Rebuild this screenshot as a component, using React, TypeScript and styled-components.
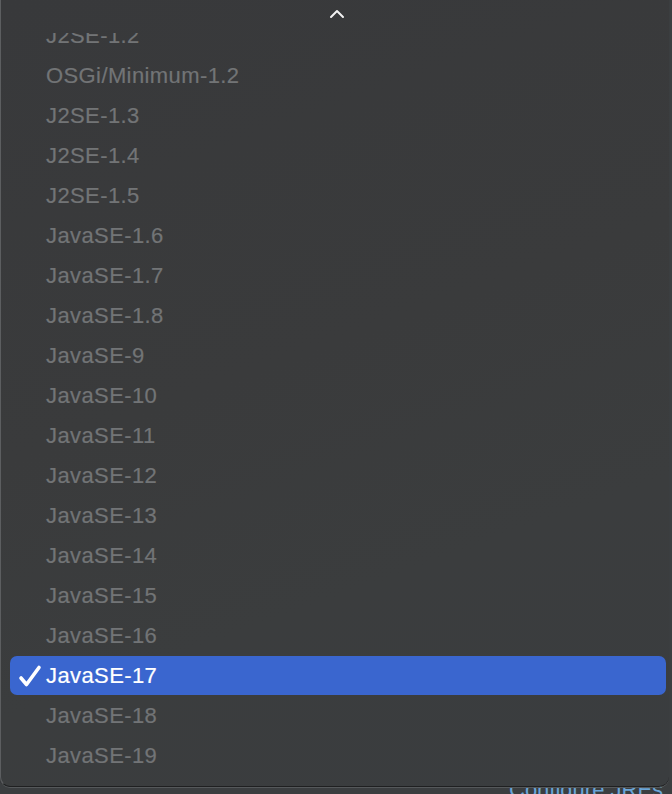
import styled, { createGlobalStyle } from 'styled-components';

const versions = [
  'J2SE-1.2',
  'OSGi/Minimum-1.2',
  'J2SE-1.3',
  'J2SE-1.4',
  'J2SE-1.5',
  'JavaSE-1.6',
  'JavaSE-1.7',
  'JavaSE-1.8',
  'JavaSE-9',
  'JavaSE-10',
  'JavaSE-11',
  'JavaSE-12',
  'JavaSE-13',
  'JavaSE-14',
  'JavaSE-15',
  'JavaSE-16',
  'JavaSE-17',
  'JavaSE-18',
  'JavaSE-19',
];

const selected = 'JavaSE-17';

const GlobalStyle = createGlobalStyle`
    html, body {
        margin: 0;
        padding: 0;
        height: 100%;
        overflow: hidden;
        background: #3b3e40;
        font-family: "Liberation Sans", Arial, sans-serif;
    }
`;

const App = () => {
  return (
    <Page>
      <GlobalStyle />
      <Menu>
        <ScrollUp>
          <svg width="16" height="10" viewBox="0 0 16 10">
            <path d="M2 8 L8 2 L14 8" fill="none" stroke="#f2f2f2" strokeWidth="2" strokeLinecap="round" strokeLinejoin="round" />
          </svg>
        </ScrollUp>
        <Viewport>
          <List>
            {versions.map((v) => {
              const isSelected = v === selected;
              return (
                <Item key={v} $selected={isSelected}>
                  <Check>
                    {isSelected && (
                      <svg width="24" height="24" viewBox="0 0 24 24">
                        <path d="M3 14 L8.5 20.5 L21 3.5" fill="none" stroke="#fff" strokeWidth="3.6" strokeLinecap="round" strokeLinejoin="round" />
                      </svg>
                    )}
                  </Check>
                  {v}
                </Item>
              );
            })}
          </List>
        </Viewport>
      </Menu>
      <Behind>
        <ConfigureLink>Configure JREs...</ConfigureLink>
      </Behind>
    </Page>
  );
};

const Page = styled.div`
    display: flex;
    flex-direction: column;
    width: 672px;
    height: 794px;
    overflow: hidden;
`;

const Menu = styled.div`
    position: relative;
    z-index: 1;
    display: flex;
    flex-direction: column;
    flex-shrink: 0;
    width: 669px;
    height: 787px;
    box-sizing: border-box;
    background: linear-gradient(160deg, #38393b 0%, #3a3b3c 45%, #3b3d3e 70%, #3a3d3f 100%);
    border-left: 1px solid #5c5e60;
    border-bottom: 1px solid #1f2021;
    border-radius: 0 0 10px 10px;
    box-shadow: 0 1px 0 #55585a, -1px 0 0 #2a2b2c;
    overflow: hidden;
`;

const ScrollUp = styled.div`
    display: flex;
    justify-content: center;
    align-items: flex-start;
    flex-shrink: 0;
    height: 33px;
    padding-top: 9px;
    padding-left: 4px;
    box-sizing: border-box;
`;

const Viewport = styled.div`
    flex: 1;
    overflow: hidden;
`;

const List = styled.ul`
    list-style: none;
    margin: -17px 0 0;
    padding: 0 3px 0 9px;
`;

const Item = styled.li<{ $selected: boolean }>`
    display: flex;
    align-items: center;
    border-radius: 7px;
    font-size: 22px;
    letter-spacing: 0.4px;
    -webkit-text-stroke: 0.2px currentColor;
    color: ${({ $selected }) => ($selected ? '#ffffff' : '#727476')};
    background: ${({ $selected }) => ($selected ? '#3a66cf' : 'transparent')};
    height: ${({ $selected }) => ($selected ? '39px' : '40px')};
    margin-bottom: ${({ $selected }) => ($selected ? '1px' : '0')};
`;

const Check = styled.span`
    display: flex;
    align-items: center;
    justify-content: center;
    width: 36px;
    height: 24px;
    padding-left: 3px;
    box-sizing: border-box;
`;

const Behind = styled.div`
    display: flex;
    flex-shrink: 0;
    padding-left: 509px;
    margin-top: -9px;
`;

const ConfigureLink = styled.span`
    font-size: 22px;
    line-height: 24px;
    color: #6aa5d8;
    white-space: nowrap;
`;

export default App;
